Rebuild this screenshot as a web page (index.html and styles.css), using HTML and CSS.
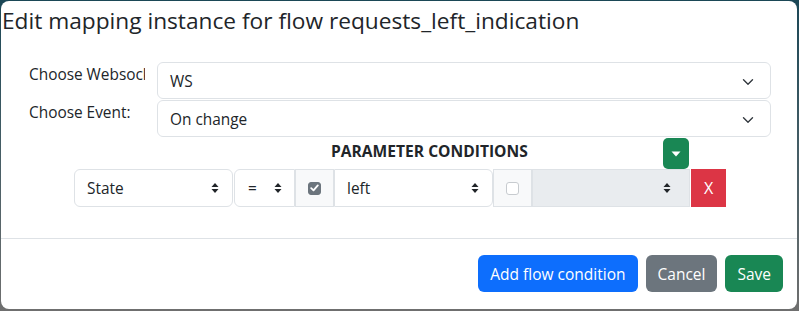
FILE: index.html
```html
<!DOCTYPE html>
<html>
<head>
<meta charset="utf-8">
<link rel="stylesheet" href="styles.css">
</head>
<body>
<div class="modal">
  <div class="modal-header">
    <h4 class="modal-title">Edit mapping instance for flow requests_left_indication</h4>
  </div>
  <div class="modal-body">
    <div class="form-row">
      <div class="label">Choose Websocket:</div>
      <div class="select">
        <span class="value">WS</span>
        <svg class="chev" width="12" height="8" viewBox="0 0 12 8"><path d="M1.5 1.8 L6 6.2 L10.5 1.8" fill="none" stroke="#343a40" stroke-width="1.4" stroke-linecap="round" stroke-linejoin="round"/></svg>
      </div>
    </div>
    <div class="form-row">
      <div class="label">Choose Event:</div>
      <div class="select">
        <span class="value">On change</span>
        <svg class="chev" width="12" height="8" viewBox="0 0 12 8"><path d="M1.5 1.8 L6 6.2 L10.5 1.8" fill="none" stroke="#343a40" stroke-width="1.4" stroke-linecap="round" stroke-linejoin="round"/></svg>
      </div>
    </div>
    <div class="cond-head">
      <div class="cond-title">PARAMETER CONDITIONS</div>
      <button class="btn-toggle"><svg width="10" height="6" viewBox="0 0 10 6"><path d="M0.5 0.5 H9.5 L5 5.5 Z" fill="#fff"/></svg></button>
    </div>
    <div class="cond-row">
      <div class="sel sel-param"><span>State</span><svg class="ud" width="8" height="12" viewBox="0 0 8 12"><path d="M0.5 5 L4 1 L7.5 5 Z M0.5 7 L4 11 L7.5 7 Z" fill="#212529"/></svg></div>
      <div class="sel sel-op"><span>=</span><svg class="ud" width="8" height="12" viewBox="0 0 8 12"><path d="M0.5 5 L4 1 L7.5 5 Z M0.5 7 L4 11 L7.5 7 Z" fill="#212529"/></svg></div>
      <div class="check-wrap"><span class="cb checked"><svg width="9" height="8" viewBox="0 0 9 8"><path d="M1.2 4.2 L3.5 6.4 L7.8 1.4" fill="none" stroke="#fff" stroke-width="1.8" stroke-linecap="round" stroke-linejoin="round"/></svg></span></div>
      <div class="sel sel-val"><span>left</span><svg class="ud" width="8" height="12" viewBox="0 0 8 12"><path d="M0.5 5 L4 1 L7.5 5 Z M0.5 7 L4 11 L7.5 7 Z" fill="#212529"/></svg></div>
      <div class="check-wrap"><span class="cb"></span></div>
      <div class="sel sel-dis"><span></span><svg class="ud" width="8" height="12" viewBox="0 0 8 12"><path d="M0.5 5 L4 1 L7.5 5 Z M0.5 7 L4 11 L7.5 7 Z" fill="#212529"/></svg></div>
      <button class="btn-x">X</button>
    </div>
  </div>
  <div class="modal-footer">
    <button class="btn btn-primary">Add flow condition</button>
    <button class="btn btn-secondary">Cancel</button>
    <button class="btn btn-success">Save</button>
  </div>
</div>
</body>
</html>
```
FILE: styles.css
```css
html, body {
  margin: 0;
  height: 100%;
}
body {
  background: linear-gradient(to bottom, #1b4756 0%, #3e5a63 40%, #6f6f6f 100%);
  padding: 1px 2px 2px 1px;
  box-sizing: border-box;
  font-family: "Open Sans", "Noto Sans", sans-serif;
  color: #212529;
  overflow: hidden;
}
.modal {
  background: #fff;
  border-radius: 8px;
  height: 308px;
  display: flex;
  flex-direction: column;
  overflow: hidden;
}
.modal-header {
  padding: 5px 0 0 1px;
  height: 48px;
  box-sizing: border-box;
}
.modal-title {
  margin: 0;
  font-size: 22.7px;
  font-weight: 400;
  line-height: 30px;
  color: #212529;
}
.modal-body {
  padding: 13px 26px 0 28px;
  height: 189px;
  box-sizing: border-box;
}
.form-row {
  display: flex;
  align-items: flex-start;
  margin-bottom: 1px;
}
.label {
  width: 116px;
  margin-right: 12px;
  white-space: nowrap;
  overflow: hidden;
  font-size: 15.4px;
  line-height: 26px;
}
.select {
  flex: 1;
  height: 37px;
  border: 1px solid #dee2e6;
  border-radius: 6px;
  box-sizing: border-box;
  display: flex;
  align-items: center;
  padding: 2px 16px 0 12px;
  font-size: 15.4px;
}
.select .value {
  flex: 1;
}
.cond-head {
  display: flex;
  align-items: flex-start;
  height: 31px;
  margin-left: 45px;
  width: 652px;
}
.cond-title {
  margin-left: 257px;
  font-weight: 700;
  font-size: 15.6px;
  line-height: 22px;
  padding-top: 2px;
}
.btn-toggle {
  margin-left: auto;
  margin-right: 37px;
  width: 26px;
  height: 31px;
  border: 0;
  padding: 0;
  border-radius: 5px;
  background: #198754;
  display: flex;
  align-items: center;
  justify-content: center;
}
.cond-row {
  display: flex;
  height: 38px;
  margin-left: 45px;
}
.sel {
  box-sizing: border-box;
  height: 38px;
  border: 1px solid #dee2e6;
  border-radius: 6px;
  display: flex;
  align-items: center;
  padding: 0 13px 0 12px;
  font-size: 15.4px;
}
.sel span {
  flex: 1;
}
.sel-param { width: 159px; margin-right: 1px; }
.sel-op { width: 61px; padding-right: 12px; padding-left: 13px; border-radius: 6px 0 0 6px; }
.sel-val { width: 159px; border-radius: 0 6px 6px 0; }
.sel-dis { width: 158px; background: #e9ecef; border-radius: 0; padding-right: 18px; }
.check-wrap {
  box-sizing: border-box;
  width: 39px;
  height: 38px;
  background: #f8f9fa;
  border: 1px solid #dee2e6;
  display: flex;
  align-items: center;
  justify-content: center;
}
.cb {
  box-sizing: border-box;
  width: 13px;
  height: 13px;
  border: 1px solid #c7cbcf;
  border-radius: 3px;
  background: #fff;
  display: flex;
  align-items: center;
  justify-content: center;
}
.cb.checked {
  background: #6c757d;
  border-color: #6c757d;
}
.btn-x {
  width: 35px;
  height: 38px;
  margin-left: 1px;
  border: 0;
  background: #dc3545;
  color: #fff;
  font-family: "Open Sans", "Noto Sans", sans-serif;
  font-size: 16px;
  padding: 0;
}
.modal-footer {
  border-top: 1px solid #dee2e6;
  display: flex;
  justify-content: flex-end;
  gap: 8px;
  padding: 16px 14px 0 0;
}
.btn {
  height: 37px;
  border: 0;
  border-radius: 6px;
  padding: 0 12px;
  font-family: "Open Sans", "Noto Sans", sans-serif;
  font-size: 15.5px;
  color: #fff;
}
.btn-primary { background: #0d6efd; }
.btn-secondary { background: #6c757d; }
.btn-success { background: #198754; }
```
